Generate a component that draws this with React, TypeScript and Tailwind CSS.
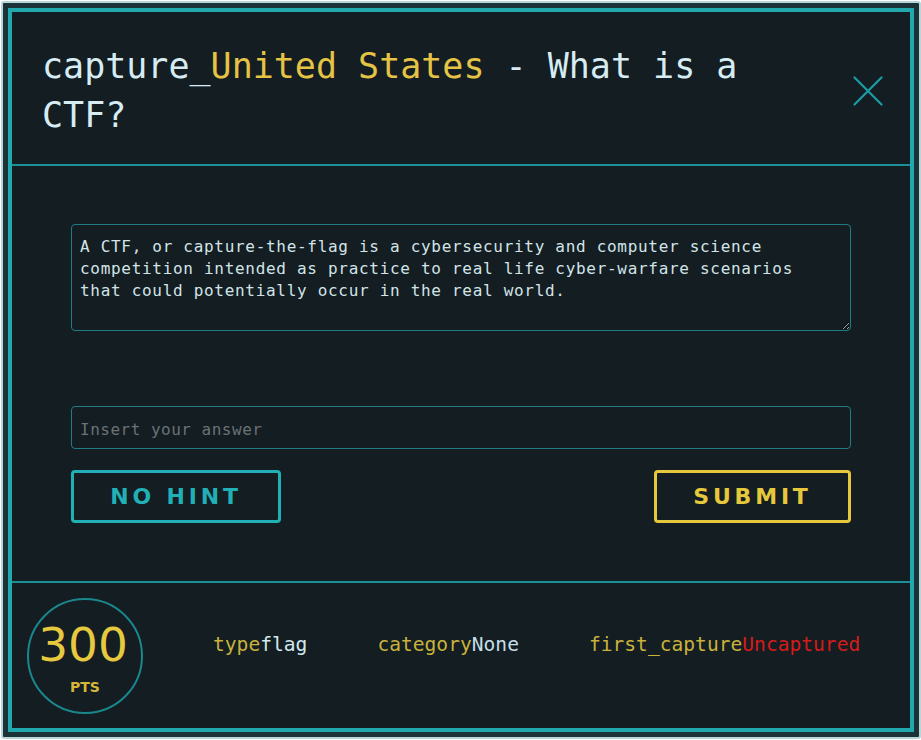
const meta = [
  { label: "type", value: "flag", valueClass: "text-[#d3e8ef]" },
  { label: "category", value: "None", valueClass: "text-[#c3dfe7]" },
  { label: "first_capture", value: "Uncaptured", valueClass: "text-[#d61b1b]" },
];

const mono = "font-['DejaVu_Sans_Mono',monospace]";

const CloseIcon = () => (
  <svg width="30" height="30" viewBox="0 0 30 30" fill="none">
    <path
      d="M1.5 1.5 L28.5 28.5 M28.5 1.5 L1.5 28.5"
      stroke="#1a9ea4"
      strokeWidth="2.2"
      strokeLinecap="round"
    />
  </svg>
);

export default function App() {
  return (
    <div className="w-[921px] h-[740px] bg-white pt-[1px] pl-[1px]">
      <div className="w-[920px] h-[738px] border-2 border-[#b7d6da] rounded-[3px] bg-[#1b3237] p-[5px]">
        <div className="h-full flex flex-col border-4 border-[#22a9ae] bg-[#131d22]">
          {/* header */}
          <div className="flex items-center justify-between pl-[30px] pr-[27px] pt-[30px] pb-[24px] border-b-2 border-[#1b9096]">
            <h1
              className={`${mono} max-w-[760px] text-[35px] leading-[49px] font-normal text-[#d6ecf2]`}
            >
              capture_<span className="text-[#e4c345]">United States</span> - What is a CTF?
            </h1>
            <button className="w-[30px] h-[30px] flex items-center justify-center">
              <CloseIcon />
            </button>
          </div>

          {/* body */}
          <div className="px-[59px] pt-[58px] pb-[58px] border-b-2 border-[#1b9096]">
            <textarea
              readOnly
              defaultValue="A CTF, or capture-the-flag is a cybersecurity and computer science competition intended as practice to real life cyber-warfare scenarios that could potentially occur in the real world."
              className={`${mono} block w-full h-[107px] rounded-[4px] border-[1.5px] border-[#1e7c82] bg-transparent pl-[8px] pr-[16px] pt-[11px] text-[16px] leading-[22px] tracking-[0.7px] text-[#d2e4e8] outline-none`}
            />
            <input
              placeholder="Insert your answer"
              className={`${mono} block w-full h-[43px] mt-[75px] rounded-[4px] border-[1.5px] border-[#1e7c82] bg-transparent px-[8px] pt-[3px] text-[16px] tracking-[0.5px] text-[#c9dee2] placeholder:text-[#6b7175] outline-none`}
            />
            <div className="flex justify-between mt-[21px]">
              <button className="w-[210px] h-[53px] rounded-[4px] border-[3px] border-[#20b0b6] text-[#20b0b6] font-['DejaVu_Sans',sans-serif] font-bold text-[22px] tracking-[3.8px]">
                NO HINT
              </button>
              <button className="w-[197px] h-[53px] rounded-[4px] border-[3px] border-[#e5c83b] text-[#e5c83b] font-['DejaVu_Sans',sans-serif] font-bold text-[22px] tracking-[3.8px]">
                SUBMIT
              </button>
            </div>
          </div>

          {/* footer */}
          <div className="flex-1 flex items-center gap-[70px] pl-[15px]">
            <div className="w-[116px] h-[116px] rounded-full border-2 border-[#1a878d] flex flex-col items-center justify-center pt-[4px]">
              <span className="font-['DejaVu_Sans',sans-serif] text-[47px] leading-none text-[#e6c93f] -ml-[4px]">
                300
              </span>
              <span className="font-['DejaVu_Sans',sans-serif] font-bold text-[14px] leading-none text-[#d4b63b] mt-[12px]">
                PTS
              </span>
            </div>
            {meta.map((m) => (
              <div key={m.label} className={`${mono} text-[19.6px] mb-[22px]`}>
                <span className="text-[#c9b23c]">{m.label}</span>
                <span className={m.valueClass}>{m.value}</span>
              </div>
            ))}
          </div>
        </div>
      </div>
    </div>
  );
}
